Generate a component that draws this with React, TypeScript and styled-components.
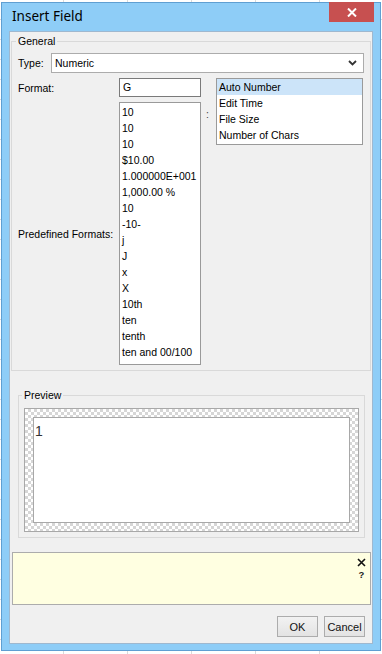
import React from "react";
import styled, { createGlobalStyle } from "styled-components";

const GlobalStyle = createGlobalStyle`
  html, body {
    margin: 0;
    padding: 0;
  }
  body {
    width: 382px;
    height: 654px;
    overflow: hidden;
    background-color: #ffffff;
    background-image:
      repeating-linear-gradient(to bottom, transparent 0 19px, #dadada 19px 20px),
      repeating-linear-gradient(to right, transparent 0 63px, #dadada 63px 64px);
    font-family: "Liberation Sans", Arial, sans-serif;
    font-size: 10.5px;
    color: #000;
  }
`;

const Window = styled.div`
  box-sizing: border-box;
  margin: 2px 0 0 1px;
  width: 380px;
  height: 649px;
  background: #8ecdf7;
  border: 1px solid #5f9fd2;
  padding: 0 7px 6px 7px;
  display: flex;
  flex-direction: column;
`;

const TitleBar = styled.div`
  height: 28px;
  display: flex;
  align-items: flex-start;
`;

const Title = styled.div`
  font-family: "Noto Sans", "Open Sans", sans-serif;
  font-size: 13.5px;
  padding: 4px 0 0 3px;
  color: #000;
`;

const CloseButton = styled.div`
  margin: -1px -1px 0 auto;
  width: 45px;
  height: 20px;
  background: #c75050;
  display: flex;
  align-items: center;
  justify-content: center;
`;

const Client = styled.div`
  flex: 1;
  box-sizing: border-box;
  background: #f0f0f0;
  border: 1px solid #9fb8cf;
  display: flex;
  flex-direction: column;
`;

const Group = styled.fieldset<{ $left: number; $right: number; $pad: number; $top: number }>`
  margin: ${(p) => p.$top}px ${(p) => p.$right}px 0 ${(p) => p.$left}px;
  border: 1px solid #d9d9d9;
  padding: 0 ${(p) => p.$pad}px 5px ${(p) => p.$pad}px;
  min-width: 0;
`;

const Legend = styled.legend`
  padding: 0 2px;
  margin-left: -2px;
  line-height: 13px;
  color: #000;
`;

const TypeRow = styled.div`
  display: flex;
  align-items: center;
  margin-top: 5px;
`;

const TypeLabel = styled.span`
  width: 33px;
`;

const Select = styled.div`
  flex: 1;
  box-sizing: border-box;
  height: 20px;
  background: #fff;
  border: 1px solid #acacac;
  display: flex;
  align-items: center;
  padding: 0 6px 0 3px;
  justify-content: space-between;
`;

const FormatGrid = styled.div`
  display: grid;
  grid-template-columns: 101px 82px 15px 147px;
  grid-template-rows: 19px 263px;
  row-gap: 5px;
  margin-top: 5px;
`;

const FieldLabel = styled.span<{ $row: number }>`
  grid-column: 1;
  grid-row: ${(p) => p.$row};
  align-self: center;
`;

const TextInput = styled.div`
  grid-column: 2;
  grid-row: 1;
  box-sizing: border-box;
  background: #fff;
  border: 1px solid #7a7a7a;
  padding: 0 3px;
  line-height: 17px;
`;

const ListBox = styled.div<{ $col: number }>`
  grid-column: ${(p) => p.$col};
  grid-row: ${(p) => (p.$col === 2 ? "2" : "1 / 3")};
  align-self: start;
  box-sizing: border-box;
  background: #fff;
  border: 1px solid #9a9a9a;
  padding: ${(p) => (p.$col === 2 ? "1px 0 5px 0" : "0 0 1px 0")};
  height: ${(p) => (p.$col === 2 ? "263px" : "67px")};
`;

const ListItem = styled.div<{ $selected?: boolean }>`
  height: 16px;
  line-height: 16px;
  padding-left: 2px;
  white-space: nowrap;
  background: ${(p) => (p.$selected ? "#cce4f9" : "transparent")};
`;

const Colon = styled.span`
  grid-column: 3;
  grid-row: 2;
  padding: 6px 0 0 5px;
  color: #444;
`;

const CheckerFrame = styled.div`
  margin-top: 6px;
  border: 1px solid #a8a8a8;
  padding: 8px;
  background-color: #fff;
  background-image: conic-gradient(#d6d6d6 25%, #fff 0 50%, #d6d6d6 0 75%, #fff 0);
  background-size: 6px 6px;
`;

const PreviewArea = styled.div`
  height: 106px;
  box-sizing: border-box;
  background: #fff;
  border: 1px solid #a8a8a8;
  padding: 5px 0 0 1px;
  font-family: "Liberation Sans", Arial, sans-serif;
  font-size: 14px;
  line-height: 17px;
  color: #333;
`;

const HintBox = styled.div`
  margin: 14px 1px 0 2px;
  height: 53px;
  box-sizing: border-box;
  background: #ffffe1;
  border: 1px solid #acacac;
  display: flex;
  justify-content: flex-end;
`;

const HintTools = styled.div`
  width: 17px;
  padding-top: 5px;
  display: flex;
  flex-direction: column;
  align-items: center;
  gap: 3px;
`;

const Question = styled.span`
  font-size: 9.5px;
  font-weight: bold;
  line-height: 10px;
  color: #222;
`;

const ButtonRow = styled.div`
  display: flex;
  justify-content: flex-end;
  gap: 6px;
  margin-top: 11px;
  padding-right: 7px;
`;

const Button = styled.div`
  width: 41px;
  height: 21px;
  box-sizing: border-box;
  border: 1px solid #acacac;
  background: linear-gradient(#f2f2f2, #e3e3e3);
  display: flex;
  align-items: center;
  justify-content: center;
  font-size: 11px;
  color: #111;
`;

const formats = [
  "10",
  "10",
  "10",
  "$10.00",
  "1.000000E+001",
  "1,000.00 %",
  "10",
  "-10-",
  "j",
  "J",
  "x",
  "X",
  "10th",
  "ten",
  "tenth",
  "ten and 00/100",
];

const fields = ["Auto Number", "Edit Time", "File Size", "Number of Chars"];

export default function App() {
  return (
    <>
      <GlobalStyle />
      <Window>
        <TitleBar>
          <Title>Insert Field</Title>
          <CloseButton>
            <svg width="10" height="9" viewBox="0 0 10 9">
              <path d="M1 0.5 L9 8.5 M9 0.5 L1 8.5" stroke="#fff" strokeWidth="2" />
            </svg>
          </CloseButton>
        </TitleBar>
        <Client>
          <Group $left={1} $right={1} $pad={6} $top={3}>
            <Legend>General</Legend>
            <TypeRow>
              <TypeLabel>Type:</TypeLabel>
              <Select>
                <span>Numeric</span>
                <svg width="9" height="6" viewBox="0 0 9 6">
                  <polyline points="1,1 4.5,4.5 8,1" fill="none" stroke="#333" strokeWidth="1.8" />
                </svg>
              </Select>
            </TypeRow>
            <FormatGrid>
              <FieldLabel $row={1}>Format:</FieldLabel>
              <TextInput>G</TextInput>
              <FieldLabel $row={2}>Predefined Formats:</FieldLabel>
              <ListBox $col={2}>
                {formats.map((f, i) => (
                  <ListItem key={i}>{f}</ListItem>
                ))}
              </ListBox>
              <Colon>:</Colon>
              <ListBox $col={4}>
                {fields.map((f, i) => (
                  <ListItem key={f} $selected={i === 0}>
                    {f}
                  </ListItem>
                ))}
              </ListBox>
            </FormatGrid>
          </Group>
          <Group $left={8} $right={7} $pad={5} $top={18}>
            <Legend>Preview</Legend>
            <CheckerFrame>
              <PreviewArea>1</PreviewArea>
            </CheckerFrame>
          </Group>
          <HintBox>
            <HintTools>
              <svg width="9" height="9" viewBox="0 0 9 9">
                <path d="M1 1 L8 8 M8 1 L1 8" stroke="#111" strokeWidth="1.6" />
              </svg>
              <Question>?</Question>
            </HintTools>
          </HintBox>
          <ButtonRow>
            <Button>OK</Button>
            <Button>Cancel</Button>
          </ButtonRow>
        </Client>
      </Window>
    </>
  );
}
